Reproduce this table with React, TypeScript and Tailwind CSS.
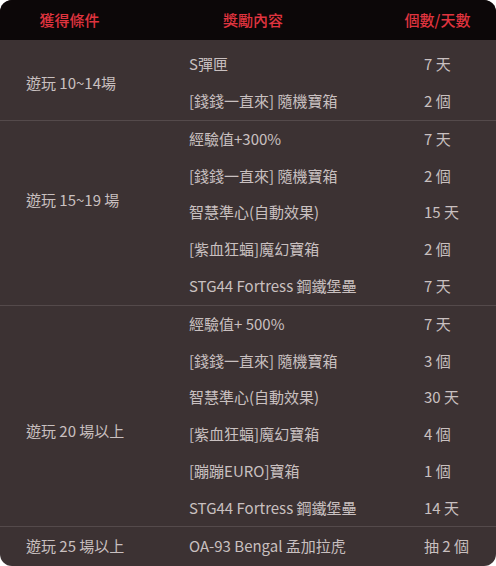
import React from "react";

type Group = {
  label: string;
  labelClass: string;
  groupClass?: string;
  rows: [string, string][];
};

const groups: Group[] = [
  {
    label: "遊玩 10~14場",
    labelClass: "self-center",
    groupClass: "pt-[6px]",
    rows: [
      ["S彈匣", "7 天"],
      ["[錢錢一直來] 隨機寶箱", "2 個"],
    ],
  },
  {
    label: "遊玩 15~19 場",
    labelClass: "pt-[68px]",
    rows: [
      ["經驗值+300%", "7 天"],
      ["[錢錢一直來] 隨機寶箱", "2 個"],
      ["智慧準心(自動效果)", "15 天"],
      ["[紫血狂蝠]魔幻寶箱", "2 個"],
      ["STG44 Fortress 鋼鐵堡壘", "7 天"],
    ],
  },
  {
    label: "遊玩 20 場以上",
    labelClass: "pt-[114px]",
    rows: [
      ["經驗值+ 500%", "7 天"],
      ["[錢錢一直來] 隨機寶箱", "3 個"],
      ["智慧準心(自動效果)", "30 天"],
      ["[紫血狂蝠]魔幻寶箱", "4 個"],
      ["[蹦蹦EURO]寶箱", "1 個"],
      ["STG44 Fortress 鋼鐵堡壘", "14 天"],
    ],
  },
];

export default function App() {
  return (
    <div className="min-h-screen w-full bg-white">
      <div
        className="w-[496px] h-[566px] rounded-xl overflow-hidden bg-[#3c3233] text-[15px] text-[#c9c0c0]"
        style={{ fontFamily: '"Noto Sans CJK TC", "Noto Sans", sans-serif' }}
      >
        {/* header */}
        <div className="h-[40px] bg-[#0c0708] grid grid-cols-[139px_228px_1fr] items-center text-[15px] font-medium text-[#e0343f]">
          <div className="text-center">獲得條件</div>
          <div className="text-center">獎勵內容</div>
          <div className="text-center pl-[12px]">個數/天數</div>
        </div>

        {groups.map((g, gi) => (
          <div
            key={gi}
            className={`flex ${gi > 0 ? "border-t border-[#544a4b]" : ""} ${g.groupClass ?? ""}`}
          >
            <div className={`w-[189px] pl-[26px] leading-[21px] ${g.labelClass}`}>
              {g.label}
            </div>
            <div className="flex-1 flex flex-col">
              {g.rows.map(([item, qty], ri) => (
                <div key={ri} className="h-[36.8px] flex items-center">
                  <div className="w-[235px]">{item}</div>
                  <div>{qty}</div>
                </div>
              ))}
            </div>
          </div>
        ))}

        {/* last */}
        <div className="flex h-[39px] items-center border-t border-[#544a4b]">
          <div className="w-[189px] pl-[26px]">遊玩 25 場以上</div>
          <div className="w-[235px]">OA-93 Bengal 孟加拉虎</div>
          <div>抽 2 個</div>
        </div>
      </div>
    </div>
  );
}
